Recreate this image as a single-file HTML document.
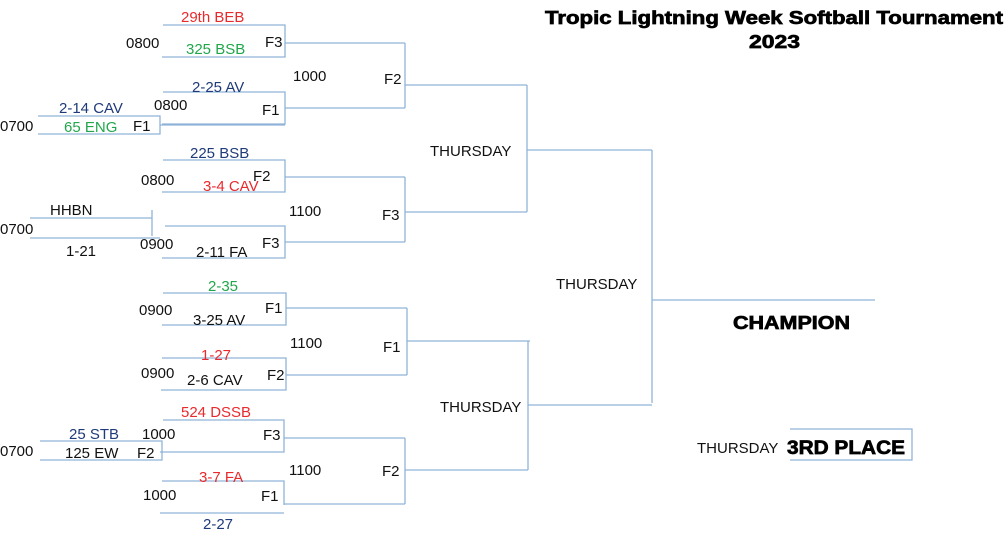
<!DOCTYPE html>
<html><head><style>
body{margin:0;background:#fff;}
svg{display:block}
text{font-family:"Liberation Sans",sans-serif;font-size:15px;fill:#111}
.r{fill:#e82a2e}.g{fill:#22a64c}.b{fill:#1f3a7a}
.h{font-weight:bold;font-size:18px;fill:#000;stroke:#000;stroke-width:0.7}
</style></head><body>
<svg width="1008" height="536" viewBox="0 0 1008 536">
<g stroke="#8fb3d8" stroke-width="1.3" fill="none">
<path d="M163 25H285V57H162M285 43H405M163 92H285V124H162M285 108H405M405 43V108M405 85H527"/>
<path d="M38 116H160V134H38M160 125H285"/>
<path d="M163 160H285V192H162M285 177H405M165 226H285V258H162M285 242H405M405 177V242M405 212H527M527 85V212M527 150H652"/>
<path d="M30 218H152M152 210V236M30 238H160"/>
<path d="M163 293H286V325H162M286 308H407M162 358H286V390H161M286 375H407M407 308V375M407 341H530"/>
<path d="M163 420H284V452H160M284 438H405M40 441H162V460H40M162 452H284"/>
<path d="M162 481H284V505M284 504H405M160 513H284M405 438V504M405 470H528M528 341V470M528 405H652M652 150V403M652 300H875"/>
<path d="M790 429H912V460H790"/>
</g>
<text x="181" y="22" class="r">29th BEB</text>
<text x="126" y="48">0800</text>
<text x="186" y="54" class="g">325 BSB</text>
<text x="265" y="47">F3</text>
<text x="293" y="81">1000</text>
<text x="384" y="84">F2</text>
<text x="192" y="92" class="b">2-25 AV</text>
<text x="154" y="110">0800</text>
<text x="262" y="115">F1</text>
<text x="59" y="113" class="b">2-14 CAV</text>
<text x="0" y="131">0700</text>
<text x="64" y="132" class="g">65 ENG</text>
<text x="133" y="131">F1</text>
<text x="430" y="156">THURSDAY</text>
<text x="190" y="158" class="b">225 BSB</text>
<text x="141" y="185">0800</text>
<text x="203" y="191" class="r">3-4 CAV</text>
<text x="253" y="181">F2</text>
<text x="289" y="216">1100</text>
<text x="382" y="220">F3</text>
<text x="50" y="215">HHBN</text>
<text x="0" y="234">0700</text>
<text x="66" y="256">1-21</text>
<text x="140" y="249">0900</text>
<text x="196" y="257">2-11 FA</text>
<text x="262" y="248">F3</text>
<text x="556" y="289">THURSDAY</text>
<text x="208" y="291" class="g">2-35</text>
<text x="139" y="315">0900</text>
<text x="265" y="313">F1</text>
<text x="193" y="325">3-25 AV</text>
<text x="290" y="348">1100</text>
<text x="383" y="352">F1</text>
<text x="201" y="360" class="r">1-27</text>
<text x="141" y="378">0900</text>
<text x="187" y="385">2-6 CAV</text>
<text x="267" y="380">F2</text>
<text x="440" y="412">THURSDAY</text>
<text x="181" y="417" class="r">524 DSSB</text>
<text x="69" y="439" class="b">25 STB</text>
<text x="142" y="439">1000</text>
<text x="263" y="440">F3</text>
<text x="0" y="456">0700</text>
<text x="65" y="458">125 EW</text>
<text x="137" y="458">F2</text>
<text x="289" y="475">1100</text>
<text x="382" y="476">F2</text>
<text x="199" y="482" class="r">3-7 FA</text>
<text x="143" y="500">1000</text>
<text x="261" y="501">F1</text>
<text x="203" y="529" class="b">2-27</text>
<text x="545" y="24" class="h" textLength="458" lengthAdjust="spacingAndGlyphs">Tropic Lightning Week Softball Tournament</text>
<text x="749" y="48" class="h" textLength="51" lengthAdjust="spacingAndGlyphs">2023</text>
<text x="733" y="329" class="h" textLength="117" lengthAdjust="spacingAndGlyphs">CHAMPION</text>
<text x="697" y="453">THURSDAY</text>
<text x="787" y="454" class="h" style="font-size:19px" textLength="118" lengthAdjust="spacingAndGlyphs">3RD PLACE</text>
</svg>
</body></html>
